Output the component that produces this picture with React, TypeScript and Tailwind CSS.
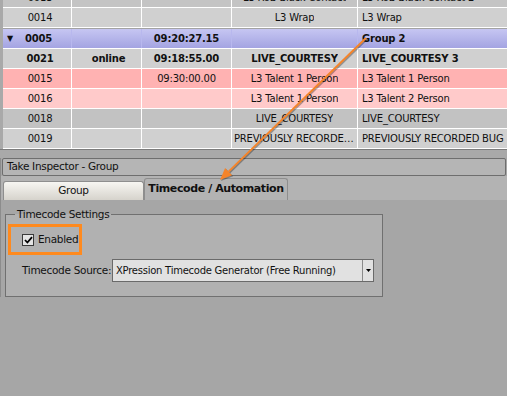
import React from "react";

type Row = {
  id: string;
  status?: string;
  time?: string;
  name: string;
  desc: string;
  bg: string;
  bold?: boolean;
};

const rows: Row[] = [
  { id: "0013", name: "L3 RoB Black Contact", desc: "L3 RoB Black Contact 2", bg: "bg-[#c4c4c4]" },
  { id: "0014", name: "L3 Wrap", desc: "L3 Wrap", bg: "bg-[#d0d0d0]" },
];

const groupRows: Row[] = [
  { id: "0021", status: "online", time: "09:18:55.00", name: "LIVE_COURTESY", desc: "LIVE_COURTESY 3", bg: "bg-[#d0d0d0]", bold: true },
  { id: "0015", time: "09:30:00.00", name: "L3 Talent 1 Person", desc: "L3 Talent 1 Person", bg: "bg-[#ffb2b2]" },
  { id: "0016", name: "L3 Talent 1 Person", desc: "L3 Talent 2 Person", bg: "bg-[#ffcaca]" },
  { id: "0018", name: "LIVE_COURTESY", desc: "LIVE_COURTESY", bg: "bg-[#c2c2c2]" },
  { id: "0019", name: "PREVIOUSLY RECORDED BUG", desc: "PREVIOUSLY RECORDED BUG", bg: "bg-[#d0d0d0]" },
];

const cell = "flex h-full items-center border-r border-white overflow-hidden whitespace-nowrap";
const label = "text-[10.5px] tracking-[-0.3px] whitespace-nowrap";

function TakeRow({ row }: { row: Row }) {
  return (
    <div
      className={`flex h-[20px] border-b border-white ${row.bg} ${row.bold ? "font-bold" : ""}`}
    >
      <div className={`${cell} w-[69px] justify-center pl-[6px]`}>{row.id}</div>
      <div className={`${cell} w-[70px] justify-center pl-[4px]`}>{row.status}</div>
      <div className={`${cell} w-[90px] justify-center`}>{row.time}</div>
      <div className={`${cell} w-[126px] justify-center px-[2px]`}>
        <span className="overflow-hidden text-ellipsis">{row.name}</span>
      </div>
      <div className="flex h-full flex-1 items-center whitespace-nowrap pl-[4px]">
        {row.desc}
      </div>
    </div>
  );
}

export default function App() {
  return (
    <div
      className="relative h-[396px] w-[507px] overflow-hidden bg-[#a6a6a6] text-[10px] tracking-[-0.2px] text-[#111]"
      style={{ fontFamily: '"DejaVu Sans", Verdana, sans-serif' }}
    >
      {/* take list */}
      <div className="h-[149px] overflow-hidden border-l-[3px] border-[#a9a9a9]">
        <div className="-mt-[12px]">
          {rows.map((r) => (
            <TakeRow key={r.id} row={r} />
          ))}
          <div className="flex h-[21px] border-t border-[#a3a3a3] border-b border-b-white bg-gradient-to-b from-[#c6c6f2] to-[#a4a4e2] font-bold">
            <div className="flex h-full w-[69px] items-center border-r border-[#b8b8ee]">
              <span className="ml-[4px] mr-[12px] text-[8px]">▼</span>
              0005
            </div>
            <div className="h-full w-[70px] border-r border-[#b8b8ee]" />
            <div className="flex h-full w-[90px] items-center justify-center border-r border-[#b8b8ee]">
              09:20:27.15
            </div>
            <div className="h-full w-[126px] border-r border-[#b8b8ee]" />
            <div className="flex h-full flex-1 items-center pl-[4px]">Group 2</div>
          </div>
          {groupRows.map((r) => (
            <TakeRow key={r.id} row={r} />
          ))}
        </div>
      </div>

      {/* splitter */}
      <div className="h-[9px] border-t border-[#7c7c7c] bg-[#a9a9a9]" />

      {/* inspector */}
      <div className="border-l border-[#8c8c8c]">
        <div className={`mx-[1px] flex h-[18px] items-center rounded-[2px] border border-[#6e6e6e] bg-[#b5b5b5] px-[4px] ${label}`}>
          Take Inspector - Group
        </div>

        <div className="flex h-[24px] items-end bg-[#b3b3b3] pl-[2px]">
          <div className={`flex h-[19px] w-[141px] items-center justify-center rounded-t-[3px] border border-b-0 border-[#8e8e8e] bg-gradient-to-b from-[#f7f6f2] to-[#d6d3cc] ${label}`}>
            Group
          </div>
          <div className="flex h-[22px] w-[144px] items-center justify-center rounded-t-[3px] border border-b-0 border-[#8e8e8e] bg-[#b3b3b3] text-[11px] font-bold tracking-[-0.4px]">
            Timecode / Automation
          </div>
        </div>

        <div className="pt-[8px] pl-[4px]">
          <fieldset className="h-[89px] w-[378px] border border-[#707070] bg-[#b1b1b1] px-[2px]">
            <legend className={`ml-[7px] px-[2px] leading-[13px] ${label}`}>
              Timecode Settings
            </legend>
            <div className="mt-[3px] flex h-[31px] w-[74px] items-center border-[3px] border-[#ff8a1e] pl-[11px]">
              <div className="flex h-[12px] w-[12px] items-center justify-center border border-[#3a3a3a] bg-[#e4e4e4]">
                <svg width="9" height="8" viewBox="0 0 9 8">
                  <path d="M1 4 L3.4 6.5 L8 1.2" fill="none" stroke="#000" strokeWidth="1.8" />
                </svg>
              </div>
              <span className={`ml-[4px] ${label}`}>Enabled</span>
            </div>
            <div className="mt-[4px] flex items-center">
              <span className={`ml-[14px] w-[90px] ${label}`}>Timecode Source:</span>
              <div className="flex h-[23px] w-[262px] items-stretch border border-[#6a6a6a] bg-[#e1e1e1]">
                <div className="flex flex-1 items-center whitespace-nowrap pl-[3px] text-[10px] tracking-[-0.25px]">
                  XPression Timecode Generator (Free Running)
                </div>
                <div className="flex w-[11px] items-center justify-center border-l border-[#8a8a8a]">
                  <svg width="5" height="3" viewBox="0 0 5 3">
                    <path d="M0 0 H5 L2.5 3 Z" fill="#000" />
                  </svg>
                </div>
              </div>
            </div>
          </fieldset>
        </div>
      </div>

      {/* annotation arrow */}
      <svg
        className="pointer-events-none absolute left-0 top-0"
        width="507"
        height="396"
        viewBox="0 0 507 396"
      >
        <line x1="367" y1="39" x2="229.6" y2="172.6" stroke="#000" strokeOpacity="0.3" strokeWidth="2" />
        <polygon points="221,181 233.1,176.2 226.1,169" fill="#000" fillOpacity="0.3" />
        <line x1="366" y1="38" x2="228.6" y2="171.6" stroke="#f5842a" strokeWidth="2" />
        <polygon points="220,180 232.1,175.2 225.1,168" fill="#f5842a" />
      </svg>
    </div>
  );
}
